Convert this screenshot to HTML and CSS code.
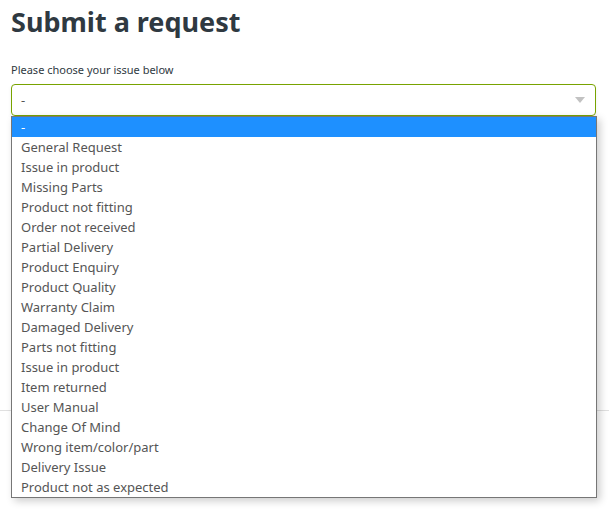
FILE: index.html
```html
<!DOCTYPE html>
<html lang="en">
<head>
  <meta charset="UTF-8" />
  <title>Submit a request</title>
  <link rel="stylesheet" href="styles.css">
</head>
<body>
  <div class="container">
    <h1>Submit a request</h1>

    <div class="field">
      <label class="field-label">Please choose your issue below</label>
      <div class="select">
        <span class="select-value">-</span>
        <span class="select-arrow"></span>

        <!-- open dropdown -->
        <ul class="options">
          <li class="selected">-</li>
          <li>General Request</li>
          <li>Issue in product</li>
          <li>Missing Parts</li>
          <li>Product not fitting</li>
          <li>Order not received</li>
          <li>Partial Delivery</li>
          <li>Product Enquiry</li>
          <li>Product Quality</li>
          <li>Warranty Claim</li>
          <li>Damaged Delivery</li>
          <li>Parts not fitting</li>
          <li>Issue in product</li>
          <li>Item returned</li>
          <li>User Manual</li>
          <li>Change Of Mind</li>
          <li>Wrong item/color/part</li>
          <li>Delivery Issue</li>
          <li>Product not as expected</li>
        </ul>
      </div>
    </div>
  </div>

  <div class="footer"></div>
</body>
</html>
```

FILE: styles.css
```css
* {
  box-sizing: border-box;
}

body {
  margin: 0;
  min-height: 510px;
  font-family: 'Noto Sans', 'Open Sans', sans-serif;
  color: #2f3941;
  background: #fff;
}

.container {
  width: 596px;
  padding: 0 0 0 11px;
}

h1 {
  margin: 0;
  padding-top: 2px;
  font-size: 27px;
  line-height: 40px;
  font-weight: bold;
  color: #2f3941;
}

.field {
  margin-top: 20px;
}

.field-label {
  display: block;
  font-size: 11px;
  line-height: 16px;
  margin-bottom: 6px;
}

.select {
  position: relative;
  height: 32px;
  border: 1px solid #78a300;
  border-radius: 4px;
  padding: 0 9px;
  display: flex;
  align-items: center;
  box-shadow: 0 2px 4px rgba(0, 0, 0, 0.06);
}

.select-value {
  flex: 1;
  font-size: 13px;
  color: #555;
}

.select-arrow {
  width: 0;
  height: 0;
  border-left: 5px solid transparent;
  border-right: 5px solid transparent;
  border-top: 6px solid #c2c2c2;
  margin-right: 1px;
}

.options {
  position: absolute;
  top: 31px;
  left: -1px;
  width: 586px;
  margin: 0;
  padding: 0;
  list-style: none;
  background: #fff;
  border: 1px solid #767676;
  box-shadow: 3px 3px 8px rgba(0, 0, 0, 0.2);
  z-index: 2;
}

.options li {
  height: 20px;
  line-height: 20px;
  padding-left: 9px;
  font-size: 13px;
  color: #555;
}

.options li.selected {
  background: #1e90ff;
  color: #fff;
}

.footer {
  margin-top: 294px;
  height: 100px;
  border-top: 1px solid #e0e0e0;
}
```
